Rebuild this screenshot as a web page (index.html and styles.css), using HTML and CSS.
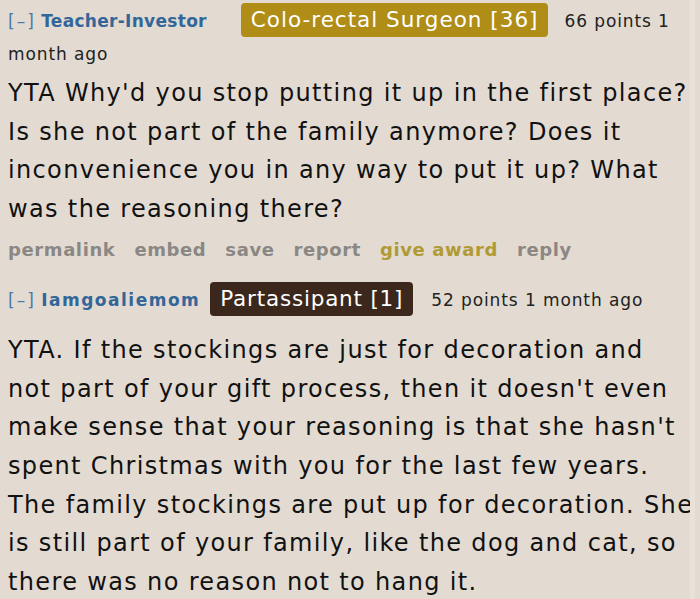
FILE: index.html
```html
<!DOCTYPE html>
<html>
<head>
<meta charset="utf-8">
<link rel="stylesheet" href="styles.css">
</head>
<body>
<div class="page">
  <div class="comment">
    <div class="tagline">
      <span class="expand">[–]</span> <span class="author">Teacher-Investor</span><span class="flair flair-gold">Colo-rectal Surgeon [36]</span><span class="score">66 points 1</span> <span class="score">month ago</span>
    </div>
    <div class="body">
      <p>YTA Why'd you stop putting it up in the first place?<br>Is she not part of the family anymore? Does it<br>inconvenience you in any way to put it up? What<br>was the reasoning there?</p>
    </div>
    <ul class="buttons">
      <li>permalink</li>
      <li>embed</li>
      <li>save</li>
      <li>report</li>
      <li class="award">give award</li>
      <li>reply</li>
    </ul>
  </div>
  <div class="comment second">
    <div class="tagline">
      <span class="expand">[–]</span> <span class="author author-wide">Iamgoaliemom</span><span class="flair flair-brown">Partassipant [1]</span><span class="score">52 points 1 month ago</span>
    </div>
    <div class="body">
      <p>YTA. If the stockings are just for decoration and<br>not part of your gift process, then it doesn't even<br>make sense that your reasoning is that she hasn't<br>spent Christmas with you for the last few years.<br>The family stockings are put up for decoration. She<br>is still part of your family, like the dog and cat, so<br>there was no reason not to hang it.</p>
    </div>
  </div>
</div>
</body>
</html>
```
FILE: styles.css
```css
html, body {
  margin: 0;
  padding: 0;
  background: #e3dbd1;
}
body {
  font-family: "DejaVu Sans", Verdana, sans-serif;
  color: #111;
}
.page {
  width: 695px;
  height: 599px;
  overflow: hidden;
  padding: 0 0 0 8px;
  box-sizing: border-box;
  background: #e3dbd1;
  border-right: 5px solid #e8e2da;
}
.tagline {
  font-size: 17px;
  line-height: 31px;
  padding-top: 5px;
  color: #222;
}
.expand {
  color: #4a78a8;
  letter-spacing: 2px;
}
.author {
  color: #336699;
  font-weight: bold;
  letter-spacing: 0.3px;
}
.author-wide {
  letter-spacing: 1.5px;
}
.score {
  letter-spacing: 0.9px;
}
.flair {
  display: inline-block;
  color: #fff;
  font-size: 21.5px;
  line-height: 34px;
  letter-spacing: 1px;
  padding: 0 10px;
  border-radius: 4px;
  vertical-align: middle;
  position: relative;
  top: -2px;
}
.flair-gold {
  background: #af8d17;
  margin: 0 16px 0 34px;
}
.flair-brown {
  background: #3c271d;
  margin: 0 18px 0 10px;
  letter-spacing: 0.8px;
}
.body p {
  margin: 0;
  font-size: 24px;
  line-height: 38.7px;
  letter-spacing: 1.35px;
  white-space: nowrap;
}
.body {
  padding-top: 4px;
}
.buttons {
  list-style: none;
  margin: 0;
  padding: 10px 0 0 0;
  display: flex;
  gap: 19px;
  font-size: 18px;
  font-weight: bold;
  letter-spacing: 0.6px;
  color: #8a8784;
  line-height: 22px;
}
.buttons .award {
  color: #b09a35;
}
.second .tagline {
  padding-top: 23px;
}
.second .body {
  padding-top: 13px;
}
```
